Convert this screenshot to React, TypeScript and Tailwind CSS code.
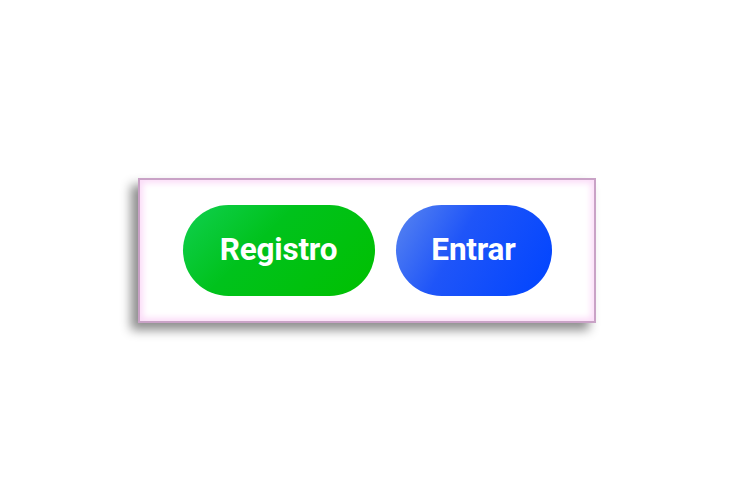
export default function App() {
  return (
    <div
      className="flex h-[500px] w-[734px] items-center justify-center bg-white"
      style={{ fontFamily: "Roboto, 'Liberation Sans', sans-serif" }}
    >
      <div className="flex h-[145px] w-[458px] items-center justify-center gap-[21px] border-2 border-[#c9a2c6] bg-white shadow-[inset_0_0_6px_3px_#fbdcf8,-7px_7px_10px_rgba(0,0,0,0.45)]">
        <button className="h-[91px] w-[192px] rounded-full bg-[linear-gradient(135deg,#10d050_0%,#00c21c_40%,#00c000_100%)] text-[31.5px] font-bold tracking-[-0.2px] text-white">
          Registro
        </button>
        <button className="h-[91px] w-[156px] rounded-full bg-[linear-gradient(120deg,#5a86f0_0%,#1f55f8_40%,#0044ff_100%)] text-[31.5px] font-bold tracking-[-0.2px] text-white">
          Entrar
        </button>
      </div>
    </div>
  );
}
